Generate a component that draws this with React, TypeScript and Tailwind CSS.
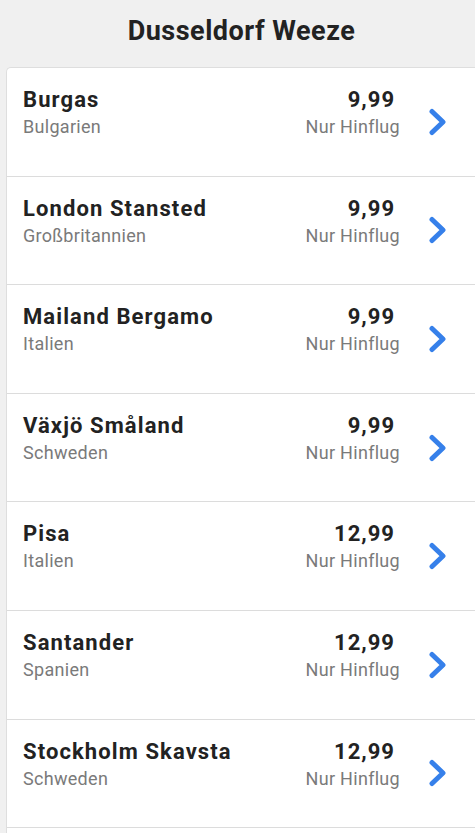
import React from 'react';

const flights = [
  { city: 'Burgas', country: 'Bulgarien', price: '9,99' },
  { city: 'London Stansted', country: 'Großbritannien', price: '9,99' },
  { city: 'Mailand Bergamo', country: 'Italien', price: '9,99' },
  { city: 'Växjö Småland', country: 'Schweden', price: '9,99' },
  { city: 'Pisa', country: 'Italien', price: '12,99' },
  { city: 'Santander', country: 'Spanien', price: '12,99' },
  { city: 'Stockholm Skavsta', country: 'Schweden', price: '12,99' },
];

const Chevron = () => (
  <svg width="20" height="28" viewBox="0 0 20 28" fill="none">
    <path d="M4 3.5 L15 14 L4 24.5" stroke="#3680ea" strokeWidth="5" strokeLinecap="round" strokeLinejoin="round" />
  </svg>
);

const App: React.FC = () => {
  return (
    <div className="h-[833px] overflow-hidden bg-[#f0f0f0] font-['Roboto',sans-serif]">
      <h1 className="h-[67px] pl-[8px] pt-[13px] text-center text-[27px] font-bold leading-[36px] tracking-[0.5px] text-[#222]">Dusseldorf Weeze</h1>
      <div className="ml-[6px] rounded-tl-[5px] border border-r-0 border-[#dedede] bg-white">
        {flights.map((f, i) => (
          <div key={i} className="flex h-[108.6px] items-center border-b border-[#dcdcdc] pl-[16px] pr-[27px]">
            <div className="flex-1 self-start pt-[18px]">
              <div className="text-[22px] font-bold leading-[28px] tracking-[1.1px] text-[#222]">{f.city}</div>
              <div className="text-[18px] leading-[25px] tracking-[0.3px] text-[#7a7a7a]">{f.country}</div>
            </div>
            <div className="self-start pt-[18px] text-right">
              <div className="pr-[5px] text-[22px] font-bold leading-[28px] tracking-[1px] text-[#222]">{f.price}</div>
              <div className="text-[18px] leading-[25px] tracking-[0.3px] text-[#7a7a7a]">Nur Hinflug</div>
            </div>
            <div className="ml-[28px] flex">
              <Chevron />
            </div>
          </div>
        ))}
        <div className="h-[20px]" />
      </div>
    </div>
  );
};

export default App;
